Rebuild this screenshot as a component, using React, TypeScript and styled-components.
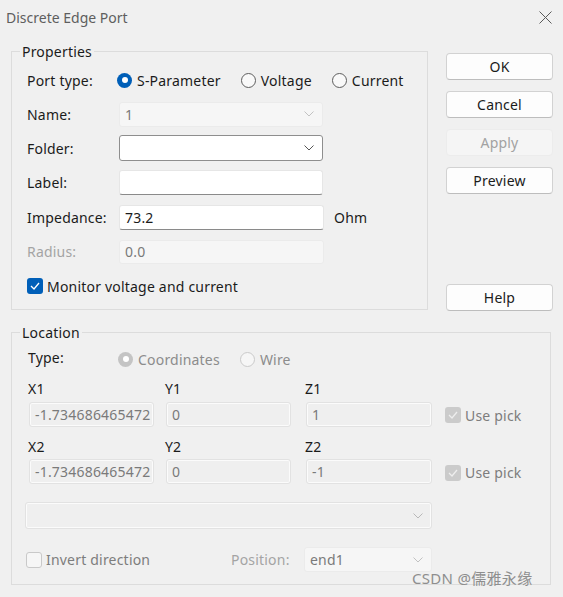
import styled, { createGlobalStyle } from 'styled-components'
import { type ReactNode } from 'react'

const GlobalStyle = createGlobalStyle`
  html, body {
    margin: 0;
    padding: 0;
    background: #f0f0f0;
  }
  body {
    font-family: "Noto Sans", "Open Sans", "Noto Sans CJK SC", sans-serif;
    font-size: 14px;
    letter-spacing: 0.2px;
    color: #1b1b1b;
  }
`

const Window = styled.div`
  position: relative;
  width: 563px;
  height: 597px;
  background: #f0f0f0;
  overflow: hidden;
  box-sizing: border-box;
`

const TitleBar = styled.div`
  height: 34px;
  display: flex;
  align-items: center;
  justify-content: space-between;
  padding: 0 11px 0 6px;
`

const Title = styled.span`
  font-size: 14px;
  color: #5e5e5e;
  letter-spacing: 0;
`

const Body = styled.div`
  padding: 8px 0 0 11px;
  display: flex;
  flex-direction: column;
  gap: 12px;
`

const TopRow = styled.div`
  display: flex;
  gap: 18px;
`

const Group = styled.fieldset<{ $w: number; $h: number }>`
  margin: 0;
  padding: 0;
  width: ${p => p.$w}px;
  height: ${p => p.$h}px;
  box-sizing: border-box;
  border: 1px solid #dcdcdc;
  min-width: 0;
`

const Legend = styled.legend`
  margin-left: 8px;
  padding: 0 2px;
  font-size: 14px;
  line-height: 19px;
  color: #1b1b1b;
`

const FormGrid = styled.div`
  display: grid;
  grid-template-columns: 92px 204px auto;
  grid-template-rows: 34px 34px 34px 35px 34px 35px 34px;
  align-items: center;
  padding: 2px 0 0 15px;
`

const FieldLabel = styled.span<{ $disabled?: boolean }>`
  color: ${p => (p.$disabled ? '#a4a4a4' : '#1b1b1b')};
  white-space: nowrap;
`

const RadioGroup = styled.div<{ $offset?: number }>`
  grid-column: 2 / 4;
  display: flex;
  align-items: center;
  gap: 20px;
  margin-left: ${p => p.$offset ?? 0}px;
`

const RadioItem = styled.label<{ $disabled?: boolean }>`
  display: flex;
  align-items: center;
  gap: 5px;
  color: ${p => (p.$disabled ? '#8c8c8c' : '#1b1b1b')};
  white-space: nowrap;
`

const RadioDot = styled.span<{ $checked?: boolean; $disabled?: boolean }>`
  position: relative;
  flex: none;
  width: 15px;
  height: 15px;
  border-radius: 50%;
  box-sizing: border-box;
  background: ${p =>
    p.$checked ? (p.$disabled ? '#c4c4c4' : '#005fb8') : p.$disabled ? '#f6f6f6' : '#f9f9f9'};
  border: ${p => (p.$checked ? 'none' : `1px solid ${p.$disabled ? '#cacaca' : '#5d5d5d'}`)};

  &::after {
    content: '';
    display: ${p => (p.$checked ? 'block' : 'none')};
    position: absolute;
    left: 50%;
    top: 50%;
    width: 6px;
    height: 6px;
    margin: -3px 0 0 -3px;
    border-radius: 50%;
    background: #ffffff;
  }
`

const InputBox = styled.div<{ $variant: 'text' | 'combo' | 'disabled' | 'ghost'; $w?: number; $h?: number }>`
  box-sizing: border-box;
  width: ${p => (p.$w ? `${p.$w}px` : '100%')};
  height: ${p => p.$h ?? 25}px;
  display: flex;
  align-items: center;
  justify-content: space-between;
  padding: 0 8px 0 5px;
  border-radius: 3px;
  overflow: hidden;
  white-space: nowrap;
  color: ${p => (p.$variant === 'text' || p.$variant === 'combo' ? '#1b1b1b' : '#7a7a7a')};
  ${p => {
    switch (p.$variant) {
      case 'text':
        return `background:#ffffff;border:1px solid #e6e6e6;border-bottom:1px solid #8a8a8a;`
      case 'combo':
        return `background:#ffffff;border:1px solid #8e8e8e;`
      case 'disabled':
        return `background:#f6f6f6;border:1px solid #ebebeb;`
      case 'ghost':
        return `background:#efefef;border:1px solid #e2e2e2;box-shadow: inset 0 0 0 1px #fbfbfb;`
    }
  }}
`

const Unit = styled.span`
  padding-left: 11px;
`

const CheckRow = styled.label<{ $disabled?: boolean; $span?: boolean; $w?: number }>`
  display: flex;
  align-items: center;
  gap: 4px;
  white-space: nowrap;
  color: ${p => (p.$disabled ? '#7d7d7d' : '#1b1b1b')};
  ${p => (p.$span ? 'grid-column: 1 / 4;' : '')}
  ${p => (p.$w ? `width: ${p.$w}px; flex: none;` : '')}
`

const CheckBox = styled.span<{ $checked?: boolean; $disabled?: boolean }>`
  flex: none;
  width: 16px;
  height: 16px;
  box-sizing: border-box;
  border-radius: 3px;
  display: flex;
  align-items: center;
  justify-content: center;
  background: ${p =>
    p.$checked ? (p.$disabled ? '#cbcbcb' : '#005fb8') : p.$disabled ? '#f6f6f6' : '#ffffff'};
  border: ${p => (p.$checked ? 'none' : `1px solid ${p.$disabled ? '#c9c9c9' : '#5d5d5d'}`)};
`

const ButtonColumn = styled.div`
  display: flex;
  flex-direction: column;
  gap: 11px;
  padding-top: 11px;
  width: 107px;
`

const Button = styled.button<{ $disabled?: boolean; $push?: number }>`
  box-sizing: border-box;
  height: 27px;
  width: 107px;
  padding: 0;
  border-radius: 4px;
  font: inherit;
  font-size: 14px;
  letter-spacing: 0.2px;
  margin-top: ${p => p.$push ?? 0}px;
  background: ${p => (p.$disabled ? '#f5f5f5' : '#fdfdfd')};
  border: 1px solid ${p => (p.$disabled ? '#ececec' : '#d2d2d2')};
  border-bottom-color: ${p => (p.$disabled ? '#ececec' : '#bdbdbd')};
  color: ${p => (p.$disabled ? '#a2a2a2' : '#1b1b1b')};
`

const LocationBody = styled.div`
  display: flex;
  flex-direction: column;
  padding: 5px 0 0 16px;
`

const TypeRow = styled.div`
  display: flex;
  align-items: center;
  height: 24px;
`

const TypeLabel = styled.span`
  width: 90px;
  margin-top: -3px;
`

const CoordGrid = styled.div`
  display: grid;
  grid-template-columns: 137px 140px 139px auto;
  grid-template-rows: 20px 28px 30px 27px;
  align-items: end;
  margin-top: 8px;
`

const CoordLabel = styled.span`
  line-height: 20px;
  color: #1b1b1b;
`

const CoordCell = styled.div`
  padding-left: 1px;
`

const PickCell = styled.div`
  padding-left: 1px;
  align-self: center;
  margin-top: 4px;
`

const WideCombo = styled.div`
  margin: 18px 0 0 -3px;
`

const BottomRow = styled.div`
  display: flex;
  align-items: center;
  margin: 18px 0 0 -2px;
  height: 25px;
`

const PositionLabel = styled.span`
  color: #a4a4a4;
  width: 73px;
  flex: none;
`

const Watermark = styled.span`
  position: absolute;
  left: 412px;
  top: 567px;
  font-size: 15px;
  color: #8e8e8e;
  letter-spacing: 0.3px;
  font-family: "Noto Sans", "Noto Sans CJK SC", sans-serif;
`

const Chevron = ({ color = '#6f6f6f' }: { color?: string }) => (
  <svg width="10" height="6" viewBox="0 0 10 6">
    <polyline points="0.5,0.5 5,5 9.5,0.5" fill="none" stroke={color} strokeWidth="1" />
  </svg>
)

const Check = ({ color = '#ffffff' }: { color?: string }) => (
  <svg width="10" height="8" viewBox="0 0 10 8">
    <polyline points="1,4 4,7 9,1" fill="none" stroke={color} strokeWidth="1.3" />
  </svg>
)

function Radio({ label, checked, disabled }: { label: string; checked?: boolean; disabled?: boolean }) {
  return (
    <RadioItem $disabled={disabled}>
      <RadioDot $checked={checked} $disabled={disabled} />
      {label}
    </RadioItem>
  )
}

function Field({ label, disabled, children, unit }: { label: string; disabled?: boolean; children: ReactNode; unit?: string }) {
  return (
    <>
      <FieldLabel $disabled={disabled}>{label}</FieldLabel>
      {children}
      {unit ? <Unit>{unit}</Unit> : <span />}
    </>
  )
}

function UsePick() {
  return (
    <CheckRow $disabled>
      <CheckBox $checked $disabled>
        <Check color="#eeeeee" />
      </CheckBox>
      Use pick
    </CheckRow>
  )
}

export default function App() {
  return (
    <Window>
      <GlobalStyle />
      <TitleBar>
        <Title>Discrete Edge Port</Title>
        <svg width="13" height="13" viewBox="0 0 13 13">
          <path d="M0.5 0.5 L12.5 12.5 M12.5 0.5 L0.5 12.5" stroke="#5a5a5a" strokeWidth="1" />
        </svg>
      </TitleBar>
      <Body>
        <TopRow>
          <Group $w={417} $h={268}>
            <Legend>Properties</Legend>
            <FormGrid>
              <FieldLabel>Port type:</FieldLabel>
              <RadioGroup $offset={-2}>
                <Radio label="S-Parameter" checked />
                <Radio label="Voltage" />
                <Radio label="Current" />
              </RadioGroup>

              <Field label="Name:">
                <InputBox $variant="disabled">
                  1
                  <Chevron color="#c2c2c2" />
                </InputBox>
              </Field>

              <Field label="Folder:">
                <InputBox $variant="combo" $h={26}>
                  <span />
                  <Chevron color="#555555" />
                </InputBox>
              </Field>

              <Field label="Label:">
                <InputBox $variant="text" />
              </Field>

              <Field label="Impedance:" unit="Ohm">
                <InputBox $variant="text" $w={205}>
                  73.2
                </InputBox>
              </Field>

              <Field label="Radius:" disabled>
                <InputBox $variant="disabled" $w={205} $h={24}>
                  0.0
                </InputBox>
              </Field>

              <CheckRow $span>
                <CheckBox $checked>
                  <Check />
                </CheckBox>
                Monitor voltage and current
              </CheckRow>
            </FormGrid>
          </Group>

          <ButtonColumn>
            <Button>OK</Button>
            <Button>Cancel</Button>
            <Button $disabled>Apply</Button>
            <Button>Preview</Button>
            <Button $push={79}>Help</Button>
          </ButtonColumn>
        </TopRow>

        <Group $w={540} $h={262}>
          <Legend>Location</Legend>
          <LocationBody>
            <TypeRow>
              <TypeLabel>Type:</TypeLabel>
              <RadioGroup $offset={0}>
                <Radio label="Coordinates" checked disabled />
                <Radio label="Wire" disabled />
              </RadioGroup>
            </TypeRow>

            <CoordGrid>
              <CoordLabel>X1</CoordLabel>
              <CoordLabel>Y1</CoordLabel>
              <CoordLabel>Z1</CoordLabel>
              <span />
              <CoordCell>
                <InputBox $variant="ghost" $w={125}>-1.734686465472</InputBox>
              </CoordCell>
              <CoordCell>
                <InputBox $variant="ghost" $w={125}>0</InputBox>
              </CoordCell>
              <CoordCell>
                <InputBox $variant="ghost" $w={126}>1</InputBox>
              </CoordCell>
              <PickCell>
                <UsePick />
              </PickCell>

              <CoordLabel>X2</CoordLabel>
              <CoordLabel>Y2</CoordLabel>
              <CoordLabel>Z2</CoordLabel>
              <span />
              <CoordCell>
                <InputBox $variant="ghost" $w={125}>-1.734686465472</InputBox>
              </CoordCell>
              <CoordCell>
                <InputBox $variant="ghost" $w={125}>0</InputBox>
              </CoordCell>
              <CoordCell>
                <InputBox $variant="ghost" $w={126}>-1</InputBox>
              </CoordCell>
              <PickCell>
                <UsePick />
              </PickCell>
            </CoordGrid>

            <WideCombo>
              <InputBox $variant="ghost" $w={407} $h={27}>
                <span />
                <Chevron color="#b8b8b8" />
              </InputBox>
            </WideCombo>

            <BottomRow>
              <CheckRow $disabled $w={205}>
                <CheckBox $disabled />
                Invert direction
              </CheckRow>
              <PositionLabel>Position:</PositionLabel>
              <InputBox $variant="disabled" $w={128}>
                end1
                <Chevron color="#c2c2c2" />
              </InputBox>
            </BottomRow>
          </LocationBody>
        </Group>
      </Body>
      <Watermark>CSDN @儒雅永缘</Watermark>
    </Window>
  )
}
